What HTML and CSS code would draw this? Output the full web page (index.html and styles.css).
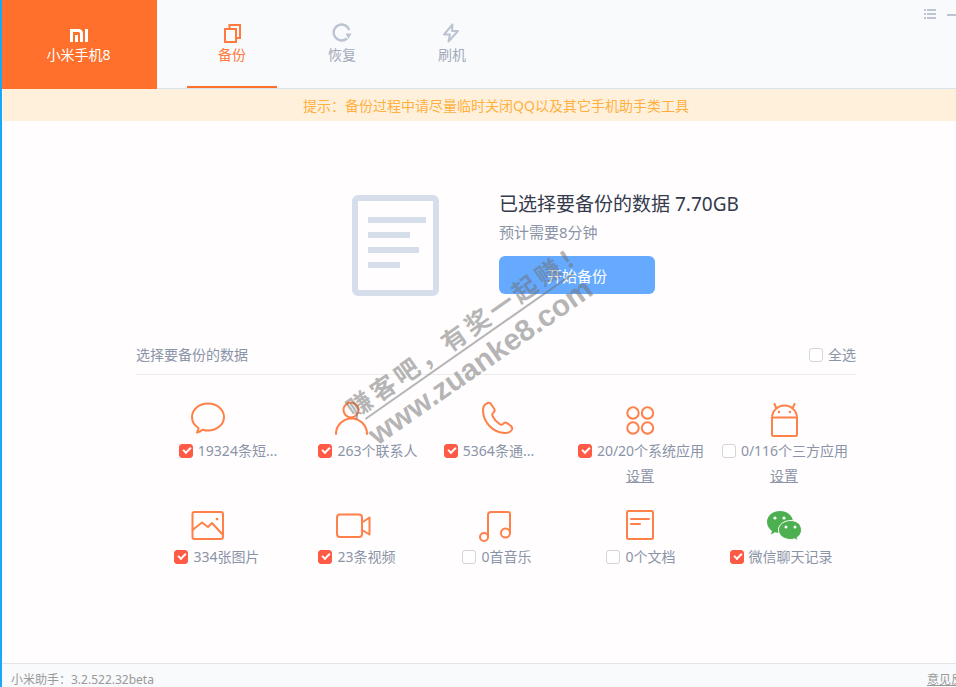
FILE: index.html
```html
<!DOCTYPE html>
<html lang="zh-CN">
<head>
    <meta charset="UTF-8">
    <meta name="viewport" content="width=device-width, initial-scale=1.0">
    <title>小米助手</title>
    <link rel="stylesheet" href="styles.css">
</head>
<body>
<div class="app">
    <header class="top">
        <div class="device">
            <svg class="mi-logo" width="18" height="13" viewBox="0 0 18 13" fill="none" stroke="#fff" stroke-width="3">
                <path d="M1.5 13V1.5H8.5a3 3 0 0 1 3 3V13M6.5 13V6M16.5 13V0"/>
            </svg>
            <span>小米手机8</span>
        </div>
        <nav class="tabs">
            <a class="tab active">
                <svg width="20" height="20" viewBox="0 0 20 20" fill="none" stroke="#ff7a3c" stroke-width="2">
                    <rect x="3" y="6" width="11" height="13"/>
                    <path d="M7.5 5.5V2H18V15H14.5"/>
                </svg>
                <span>备份</span>
            </a>
            <a class="tab">
                <svg width="20" height="20" viewBox="0 0 20 20" fill="none" stroke="#bcc4d2" stroke-width="2.4">
                    <path d="M15 15.5A8 8 0 1 1 17.3 7"/>
                    <path d="M13.5 10.5H19.5L16.5 16Z" fill="#bcc4d2" stroke="none"/>
                </svg>
                <span>恢复</span>
            </a>
            <a class="tab">
                <svg width="20" height="20" viewBox="0 0 20 20" fill="none" stroke="#bcc4d2" stroke-width="2">
                    <path d="M10.5 1.5L2 11.5H8L6.5 18.5L16 8H10Z" stroke-linejoin="round"/>
                </svg>
                <span>刷机</span>
            </a>
        </nav>
        <div class="win-btns">
            <svg width="12" height="10" viewBox="0 0 12 10" fill="#bcc4d2">
                <path d="M0 0h2v2H0zM3 0h9v2H3zM0 4h2v2H0zM3 4h9v2H3zM0 8h2v2H0zM3 8h9v2H3z"/>
            </svg>
            <span class="min-btn"></span>
        </div>
    </header>

    <div class="notice">提示：备份过程中请尽量临时关闭QQ以及其它手机助手类工具</div>

    <main class="content">
        <section class="hero">
            <div class="doc-pic">
                <i class="w1"></i>
                <i class="w2"></i>
                <i class="w3"></i>
                <i class="w4"></i>
            </div>
            <div class="hero-text">
                <h1>已选择要备份的数据 7.70GB</h1>
                <p>预计需要8分钟</p>
                <button class="start-btn">开始备份</button>
            </div>
        </section>

        <section class="picker">
            <div class="picker-head">
                <span>选择要备份的数据</span>
                <label class="check-line"><i class="box"></i>全选</label>
            </div>
            <div class="grid">
                <div class="item">
                    <svg class="ico" viewBox="0 0 40 40">
                        <path d="M20 3.500C11 3.500 4 9.500 4 17c0 4.500 2.500 8.500 6.500 11-.3 2-1 3.500-1.500 4.500 2.500-.5 4.500-1.500 5.500-2.800 1.800.5 3.600.8 5.500.8 9 0 16-6 16-13.500S29 3.500 20 3.500z"/>
                    </svg>
                    <label class="check-line shift-a"><i class="box on"></i>19324条短...</label>
                </div>
                <div class="item">
                    <svg class="ico" viewBox="0 0 40 40">
                        <circle cx="19" cy="10" r="7.500"/>
                        <path d="M4 34a15.500 15.500 0 0 1 31 0"/>
                    </svg>
                    <label class="check-line shift-b"><i class="box on"></i>263个联系人</label>
                </div>
                <div class="item">
                    <svg class="ico" viewBox="0 0 40 40">
                        <path d="M11 3.500c-2.500 1-4 3.500-4 6.500 0 12 10 23 22 23 3 0 6-1 7-3.500.5-1.500 0-2.500-1-3.500l-4-3c-1.500-1-2.500-.5-3.500.5-1 1.500-2.500 1.500-4 .5-3-2-5.500-5-7-8-.5-1.500-.5-2.500 1-3.500 1.200-1 1.500-2.500.5-4l-3-4.500c-1-1-2-1.500-3.500-1z"/>
                    </svg>
                    <label class="check-line shift-c"><i class="box on"></i>5364条通...</label>
                </div>
                <div class="item">
                    <svg class="ico" viewBox="0 0 40 40">
                        <circle cx="13" cy="13" r="5.700"/>
                        <circle cx="27.500" cy="13" r="5.700"/>
                        <circle cx="13" cy="28" r="5.700"/>
                        <circle cx="27.500" cy="28" r="5.700"/>
                    </svg>
                    <label class="check-line"><i class="box on"></i>20/20个系统应用</label>
                    <a class="setting">设置</a>
                </div>
                <div class="item">
                    <svg class="ico" viewBox="0 0 40 40">
                        <path d="M8 18a12.500 12.500 0 0 1 25 0V34.500a1.500 1.500 0 0 1-1.500 1.500H9.500A1.500 1.500 0 0 1 8 34.500ZM8 17.500H33M12 7.500L10.500 4M29 7.500L30.500 4"/>
                        <circle class="solid" cx="15" cy="12" r="1.200"/>
                        <circle class="solid" cx="26" cy="12" r="1.200"/>
                    </svg>
                    <label class="check-line"><i class="box"></i>0/116个三方应用</label>
                    <a class="setting">设置</a>
                </div>

                <div class="item">
                    <svg class="ico" viewBox="0 0 40 40">
                        <rect x="4.500" y="6" width="30.500" height="27" rx="2"/>
                        <path d="M4.500 24L14 16.500L20 21L24 17L35 29"/>
                        <circle class="solid" cx="29" cy="13" r="1.300"/>
                    </svg>
                    <label class="check-line shift-d"><i class="box on"></i>334张图片</label>
                </div>
                <div class="item">
                    <svg class="ico" viewBox="0 0 40 40">
                        <rect x="5" y="8.500" width="25" height="22.500" rx="3"/>
                        <path d="M30 16.500L37.500 11.500V28.500L30 24"/>
                    </svg>
                    <label class="check-line shift-e"><i class="box on"></i>23条视频</label>
                </div>
                <div class="item">
                    <svg class="ico" viewBox="0 0 40 40">
                        <circle cx="8" cy="31" r="4"/>
                        <circle cx="29.500" cy="27" r="4.500"/>
                        <path d="M12 31V9a3 3 0 0 1 3-3H32a2 2 0 0 1 2 2V27"/>
                    </svg>
                    <label class="check-line"><i class="box"></i>0首音乐</label>
                </div>
                <div class="item">
                    <svg class="ico" viewBox="0 0 40 40">
                        <rect x="7" y="5" width="26" height="28" rx="1.500"/>
                        <path d="M11 13H29M11 18H20"/>
                    </svg>
                    <label class="check-line"><i class="box"></i>0个文档</label>
                </div>
                <div class="item">
                    <svg class="ico wechat" viewBox="0 0 40 40">
                        <path d="M16 5C9 5 3 9.500 3 16c0 3.800 2 6.800 5 9l-1.200 3.500 4.200-2.200c1.500.4 3.200.7 5 .7 7 0 13-4.500 13-11S23 5 16 5z"/>
                        <path class="edge" d="M26.500 14.500c-6.500 0-12 4-12 9.500s5.500 9.500 12 9.500c1.500 0 2.800-.3 4-.7l3.500 2-1-3.200c2.800-1.700 4.500-4.400 4.500-7.600 0-5.500-4.500-9.500-10.500-9.500z"/>
                        <circle class="eye" cx="11" cy="12" r="1.600"/>
                        <circle class="eye" cx="20" cy="12" r="1.600"/>
                        <circle class="eye" cx="22" cy="21" r="1.500"/>
                        <circle class="eye" cx="31" cy="21" r="1.500"/>
                    </svg>
                    <label class="check-line shift-f"><i class="box on"></i>微信聊天记录</label>
                </div>
            </div>
        </section>

        <div class="watermark">
            <div class="wm-cn">赚客吧，有奖一起赚！</div>
            <div class="wm-line"></div>
            <div class="wm-en">www.zuanke8.com</div>
        </div>
    </main>

    <footer class="bottom">
        <span>小米助手：3.2.522.32beta</span>
        <a class="feedback">意见反馈</a>
    </footer>
</div>
</body>
</html>
```

FILE: styles.css
```css
/* the window is wider than the capture, it gets cut on the right */
* {
    box-sizing: border-box;
}
html, body {
    margin: 0;
    height: 100%;
    overflow: hidden;
}
body {
    font-family: "Noto Sans", "Noto Sans CJK SC", sans-serif;
    font-size: 14px;
    background-color: #fffdfd;
    color: #8a94a8;
}
.app {
    width: 992px;
    height: 687px;
    display: flex;
    flex-direction: column;
    border-left: 2px solid #1aa7f5;
}

/* header */
.top {
    height: 89px;
    flex: none;
    display: flex;
    background-color: #f8fafc;
    border-bottom: 1px solid #dbe4ee;
}
.device {
    width: 155px;
    height: 89px;
    padding: 29px 2px 0 0;
    background-color: #ff702c;
    color: #fff;
    display: flex;
    flex-direction: column;
    align-items: center;
    line-height: 20px;
}
.mi-logo {
    display: block;
    margin-bottom: 3px;
}
.tabs {
    display: flex;
    margin-left: 30px;
    gap: 20px;
}
.tab {
    width: 90px;
    height: 88px;
    padding-top: 23px;
    display: flex;
    flex-direction: column;
    align-items: center;
    line-height: 20px;
    color: #a3abba;
}
.tab svg {
    display: block;
    margin-bottom: 2px;
}
.tab.active {
    color: #ff7a3c;
    border-bottom: 2px solid #ff702c;
    height: 88px;
}
.win-btns {
    margin-left: auto;
    margin-right: 32px;
    padding-top: 9px;
    display: flex;
    gap: 11px;
    align-items: flex-start;
}
.win-btns svg {
    display: block;
}
.min-btn {
    width: 13px;
    height: 2px;
    margin-top: 5px;
    background-color: #bcc4d2;
}

.notice {
    height: 32px;
    flex: none;
    margin-left: 1px;
    padding-right: 3px;
    line-height: 33px;
    text-align: center;
    background-color: #fff0dc;
    color: #ffb03f;
}

/* main part */
.content {
    flex: 1;
    position: relative;
    padding: 74px 136px 0 134px;
}
.hero {
    display: flex;
    gap: 60px;
    padding-left: 216px;
}
.doc-pic {
    width: 87px;
    height: 101px;
    padding: 16px 10px 0;
    border: 6px solid #d6deeb;
    border-radius: 6px;
    display: flex;
    flex-direction: column;
    gap: 9px;
}
.doc-pic i {
    display: block;
    height: 6px;
    background-color: #d6deeb;
}
.doc-pic .w1 { width: 58px; }
.doc-pic .w2 { width: 42px; }
.doc-pic .w3 { width: 51px; }
.doc-pic .w4 { width: 32px; }
.hero-text {
    margin-top: -3px;
}
.hero-text h1 {
    margin: 0;
    font-size: 19px;
    font-weight: 400;
    line-height: 24px;
    color: #333b4d;
}
.hero-text p {
    margin: 6px 0 14px;
    font-size: 15px;
    line-height: 20px;
    color: #8a94a8;
}
.start-btn {
    display: block;
    width: 156px;
    height: 38px;
    border: none;
    border-radius: 6px;
    background-color: #66aaff;
    color: #fff;
    font-family: inherit;
    font-size: 15px;
}

.picker {
    margin-top: 49px;
}
.picker-head {
    height: 30px;
    line-height: 20px;
    display: flex;
    justify-content: space-between;
    align-items: flex-start;
    border-bottom: 1px solid #ececec;
}
.check-line {
    display: flex;
    align-items: center;
    line-height: 20px;
    white-space: nowrap;
}
.box {
    width: 14px;
    height: 14px;
    margin-right: 5px;
    flex: none;
    background-color: #fff;
    border: 1px solid #d5d5d8;
    border-radius: 3px;
}
.box.on {
    position: relative;
    background-color: #ff5a45;
    border-color: #ff5a45;
}
.box.on::after {
    content: "";
    position: absolute;
    left: 3px;
    top: 2px;
    width: 6px;
    height: 3px;
    border-left: 2px solid #fff;
    border-bottom: 2px solid #fff;
    transform: rotate(-45deg);
}
.grid {
    display: grid;
    grid-template-columns: repeat(5, 144px);
    row-gap: 20px;
    padding-top: 25px;
}
.item {
    display: flex;
    flex-direction: column;
    align-items: center;
}
.item .check-line {
    margin-left: 2px;
}
.ico {
    display: block;
    width: 40px;
    height: 40px;
    margin-bottom: 1px;
    fill: none;
    stroke: #ff8048;
    stroke-width: 2;
    stroke-linejoin: round;
    stroke-linecap: round;
}
.ico .solid {
    fill: #ff8048;
    stroke: none;
}
.ico.wechat {
    stroke: none;
    fill: #4caf50;
}
.ico.wechat .edge {
    stroke: #fffdfd;
    stroke-width: 1;
}
.ico.wechat .eye {
    fill: #fff;
}
.setting {
    margin-top: 5px;
    line-height: 20px;
    text-decoration: underline;
}
/* labels that don't sit centered under their icon */
.item .shift-a { margin-left: 40px; }
.item .shift-b { margin-left: 32px; }
.item .shift-c { margin-left: -14px; }
.item .shift-d { margin-left: 18px; }
.item .shift-e { margin-left: 10px; }
.item .shift-f { margin-left: -6px; }

/* forum watermark on top of the screenshot */
.watermark {
    position: absolute;
    left: 318px;
    top: 194px;
    width: 300px;
    display: flex;
    flex-direction: column;
    align-items: center;
    transform: rotate(-35deg);
    color: rgba(110, 110, 110, 0.5);
    font-weight: 700;
    pointer-events: none;
}
.wm-cn {
    padding-left: 16px;
    font-family: "Noto Sans CJK SC", sans-serif;
    font-size: 25px;
    letter-spacing: 3.8px;
    line-height: 28px;
    white-space: nowrap;
}
.wm-line {
    width: 254px;
    height: 2px;
    margin: 2px 0 4px;
    background-color: rgba(110, 110, 110, 0.5);
}
.wm-en {
    font-family: "Liberation Sans", sans-serif;
    font-size: 30px;
    line-height: 28px;
    white-space: nowrap;
}

.bottom {
    height: 24px;
    flex: none;
    padding: 8px 17px 0 9px;
    display: flex;
    justify-content: space-between;
    background-color: #f8fafc;
    border-top: 1px solid #e4e4e4;
    font-size: 12px;
    line-height: 16px;
    color: #999;
}
.feedback {
    text-decoration: underline;
}
```
